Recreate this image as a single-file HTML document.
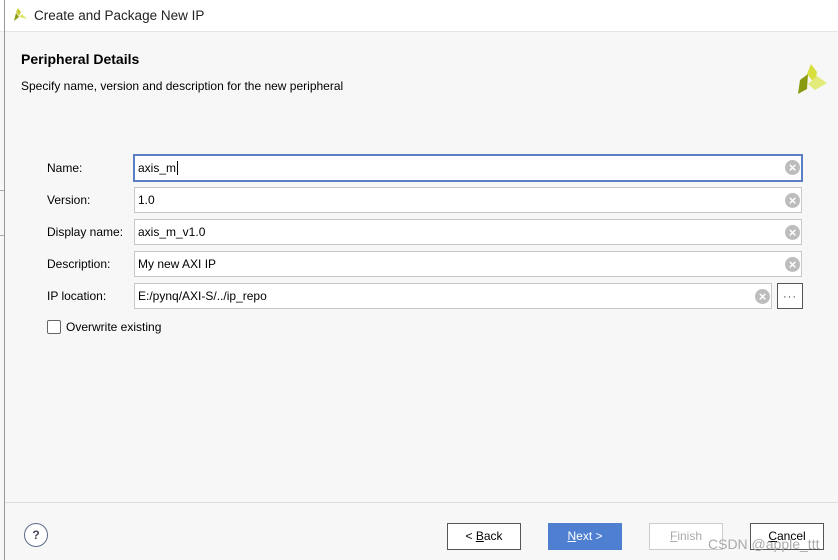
<!DOCTYPE html><html><head><style>
body{margin:0;width:838px;height:560px;overflow:hidden;background:#f7f7f7;font-family:"Liberation Sans",sans-serif;font-size:12px;color:#000;position:relative}
.a{position:absolute}
.f{position:absolute;left:134px;width:666px;height:24px;border:1px solid #c8c8c8;background:#fff;box-sizing:content-box}
.f span{position:absolute;left:3px;top:5px;font-size:12px}
.x{position:absolute;right:1px;top:5px;width:15px;height:15px;border-radius:50%;background:#bdbdbd;color:#fff;font-size:13px;line-height:15px;text-align:center;font-weight:bold}
.l{position:absolute;left:47px}
.b{position:absolute;top:523px;width:72px;height:25px;border:1px solid #555;background:#fff;text-align:center;line-height:25px;font-size:12px;box-sizing:content-box}
</style></head><body>
<div class="a" style="left:0;top:0;width:838px;height:31px;background:#fff;border-bottom:1px solid #e6e6e6"></div>
<div class="a" style="left:4px;top:0;width:1px;height:560px;background:#999"></div>
<div class="a" style="left:0;top:190px;width:4px;height:1px;background:#aaa"></div>
<div class="a" style="left:0;top:235px;width:4px;height:1px;background:#aaa"></div>
<svg class="a" style="left:12px;top:7px" width="16" height="16" viewBox="0 0 16 16"><polygon points="6,1 9,5 7,9 4,5" fill="#c8cc3a"/><polygon points="2,14 4,6 7,10" fill="#8a9a10"/><polygon points="7,10 10,7 15,12" fill="#dde66a"/></svg>
<div class="a" style="left:34px;top:8px;font-size:13.5px;color:#222">Create and Package New IP</div>
<div class="a" style="left:21px;top:51px;font-size:14px;font-weight:bold">Peripheral Details</div>
<div class="a" style="left:21px;top:79px;font-size:12px">Specify name, version and description for the new peripheral</div>
<svg class="a" style="left:796px;top:62px" width="36" height="34" viewBox="0 0 36 34"><polygon points="15,2 21,10 19,22 11,12" fill="#d6df3c"/><polygon points="2,32 4,18 12,12 11,27" fill="#8a9a10"/><polygon points="12,22 21,14 31,21 19,28" fill="#e2ea7a"/></svg>
<div class="l" style="top:161px">Name:</div>
<div class="l" style="top:193px">Version:</div>
<div class="l" style="top:225px">Display name:</div>
<div class="l" style="top:257px">Description:</div>
<div class="l" style="top:289px">IP location:</div>
<div class="f" style="top:154px;border:2px solid #5a7fc4;left:133px;height:24px"><span>axis_m<b style="font-weight:normal;border-left:1px solid #000;margin-left:1px"></b></span><div class="x" style="top:4px">×</div></div>
<div class="f" style="top:187px"><span>1.0</span><div class="x">×</div></div>
<div class="f" style="top:219px"><span>axis_m_v1.0</span><div class="x">×</div></div>
<div class="f" style="top:251px"><span>My new AXI IP</span><div class="x">×</div></div>
<div class="f" style="top:283px;width:636px"><span>E:/pynq/AXI-S/../ip_repo</span><div class="x">×</div></div>
<div class="a" style="left:777px;top:283px;width:24px;height:24px;border:1px solid #555;background:#fff;text-align:center;line-height:26px;font-size:11px;letter-spacing:1px;color:#333">···</div>
<div class="a" style="left:47px;top:320px;width:12px;height:12px;border:1px solid #666;background:#fff;border-radius:2px"></div>
<div class="a" style="left:66px;top:320px">Overwrite existing</div>
<div class="a" style="left:5px;top:502px;width:833px;height:1px;background:#ddd"></div>
<div class="a" style="left:24px;top:523px;width:22px;height:22px;border:1px solid #5a6a88;border-radius:50%;background:#fff;text-align:center;line-height:22px;font-weight:bold;color:#445">?</div>
<div class="b" style="left:447px">&lt; <u>B</u>ack</div>
<div class="b" style="left:548px;background:#4f7fd0;border-color:#4f7fd0;color:#fff"><u>N</u>ext &gt;</div>
<div class="b" style="left:649px;border-color:#ccc;color:#aaa"><u>F</u>inish</div>
<div class="b" style="left:750px"><u>C</u>ancel</div>
<div class="a" style="left:708px;top:536px;font-size:14px;color:#aaa">CSDN @apple_ttt</div>
</body></html>
